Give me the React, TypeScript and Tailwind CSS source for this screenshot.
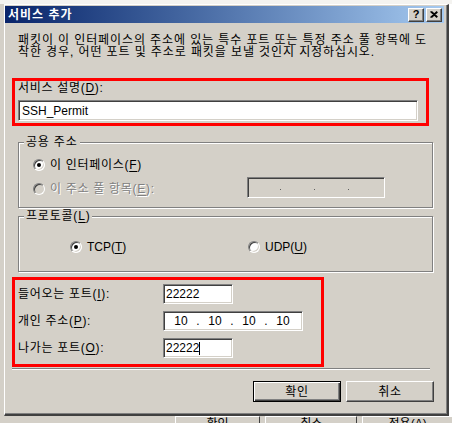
import React from "react";

const sunken =
  "border border-t-[#808080] border-l-[#808080] border-b-white border-r-white shadow-[inset_1px_1px_0_#404040,inset_-1px_-1px_0_#d4d0c8]";
const raised =
  "bg-[#d4d0c8] border border-t-white border-l-white border-r-[#404040] border-b-[#404040] shadow-[inset_-1px_-1px_0_#808080]";

function U({ c }: { c: string }) {
  return <span className="underline underline-offset-[2px] decoration-[1px]">{c}</span>;
}

function Radio({ checked, disabled }: { checked?: boolean; disabled?: boolean }) {
  return (
    <span
      className={
        "w-[12px] h-[12px] rounded-full shrink-0 flex items-center justify-center border border-t-[#808080] border-l-[#808080] border-r-white border-b-white shadow-[inset_1px_1px_0_#404040,inset_-1px_-1px_0_#d4d0c8] " +
        (disabled ? "bg-[#d4d0c8]" : "bg-white")
      }
    >
      {checked && <span className="w-[4px] h-[4px] rounded-full bg-black" />}
    </span>
  );
}

function Group({
  label,
  mt,
  h,
  children,
}: {
  label: React.ReactNode;
  mt: string;
  h: string;
  children: React.ReactNode;
}) {
  return (
    <div
      className={
        "relative ml-[13px] w-[415px] border border-[#808080] shadow-[inset_1px_1px_0_#fff,1px_1px_0_#fff] flex flex-col " +
        mt +
        " " +
        h
      }
    >
      <span className="absolute left-[5px] -top-[7px] bg-[#d4d0c8] px-[2px] text-[12px] leading-[12px] tracking-[0.8px]">
        {label}
      </span>
      {children}
    </div>
  );
}

export default function App() {
  return (
    <div className="w-[452px] h-[423px] overflow-hidden bg-white flex flex-col font-['Liberation_Sans','Noto_Sans_CJK_KR',sans-serif] text-[12px] leading-[12px] text-black">
      <div className="h-[4px] shrink-0 bg-[#f4f3f0]" />
      <div className="flex shrink-0">
        <div className="w-[4px] bg-[#d4d0c8]" />
        {/* window */}
        <div className="w-[445px] h-[412px] bg-[#d4d0c8] border-l border-t border-l-white border-t-white border-r-2 border-b-2 border-r-[#404040] border-b-[#404040] shadow-[inset_-1px_-1px_0_#808080] flex flex-col">
          {/* title bar */}
          <div className="mt-[1px] mr-[3px] h-[17px] bg-linear-to-r from-[#0a246a] to-[#a6caf0] flex items-center pl-[3px] pr-[2px]">
            <span className="text-white font-bold text-[12px] leading-[12px] tracking-[1px]">서비스 추가</span>
            <div className="ml-auto flex gap-[2px]">
              <div className={"w-[16px] h-[14px] flex items-center justify-center " + raised}>
                <span className="font-bold text-[11px] leading-[11px]">?</span>
              </div>
              <div className={"w-[16px] h-[14px] flex items-center justify-center " + raised}>
                <svg width="8" height="7" viewBox="0 0 8 7">
                  <path d="M0.5 0.5 L7 6.5 M1.5 0.5 L7.5 6 M7 0.5 L0.5 6.5 M7.5 1 L1.5 6.5" stroke="#000" strokeWidth="1.2" />
                </svg>
              </div>
            </div>
          </div>

          {/* description */}
          <div className="mt-[11px] ml-[13px] whitespace-nowrap tracking-[0.9px]">
            <div>패킷이 이 인터페이스의 주소에 있는 특수 포트 또는 특정 주소 풀 항목에 도</div>
            <div>착한 경우, 어떤 포트 및 주소로 패킷을 보낼 것인지 지정하십시오.</div>
          </div>

          {/* red box 1 */}
          <div className="mt-[20px] ml-[7px] w-[417px] h-[48px] border-[3px] border-[#ff0000] flex flex-col px-[3px]">
            <div className="mt-[1px] h-[12px] tracking-[0.7px]">
              서비스 설명(<U c="D" />):
            </div>
            <div className={"mt-[6px] w-[400px] h-[21px] bg-white flex items-center pl-[3px] " + sunken}>
              SSH_Permit
            </div>
          </div>

          {/* group 1 */}
          <Group label="공용 주소" mt="mt-[16px]" h="h-[66px]">
            <div className="mt-[16px] ml-[14px] flex items-center gap-[5px] h-[12px]">
              <Radio checked />
              <span className="tracking-[0.7px]">
                이 인터페이스(<U c="F" />)
              </span>
            </div>
            <div className="mt-[6px] ml-[14px] flex items-center h-[21px]">
              <div className="w-[214px] flex items-center gap-[5px] mt-[2px]">
                <Radio disabled />
                <span className="text-[#808080] [text-shadow:1px_1px_0_#fff] tracking-[0.7px]">
                  이 주소 풀 항목(<U c="E" />):
                </span>
              </div>
              <div className={"w-[138px] h-[21px] bg-[#d4d0c8] flex items-center pl-[32px] " + sunken}>
                <span className="mt-[3px] w-[1px] h-[1px] bg-[#606060]" />
                <span className="w-[33px]" />
                <span className="mt-[3px] w-[1px] h-[1px] bg-[#606060]" />
                <span className="w-[33px]" />
                <span className="mt-[3px] w-[1px] h-[1px] bg-[#606060]" />
              </div>
            </div>
          </Group>

          {/* group 2 */}
          <Group
            label={
              <>
                프로토콜(<U c="L" />)
              </>
            }
            mt="mt-[8px]"
            h="h-[56px]"
          >
            <div className="mt-[24px] ml-[51px] flex items-center h-[12px]">
              <div className="w-[178px] flex items-center gap-[5px]">
                <Radio checked />
                <span>
                  TCP(<U c="T" />)
                </span>
              </div>
              <div className="flex items-center gap-[5px]">
                <Radio />
                <span>
                  UDP(<U c="U" />)
                </span>
              </div>
            </div>
          </Group>

          {/* red box 2 */}
          <div className="mt-[5px] ml-[7px] w-[312px] h-[90px] border-[3px] border-[#ff0000] flex flex-col pl-[3px] pt-[4px] gap-[7px]">
            <div className="flex items-center h-[20px]">
              <span className="w-[145px] tracking-[0.7px]">
                들어오는 포트(<U c="I" />):
              </span>
              <div className={"w-[70px] h-[20px] bg-white flex items-center pl-[2px] " + sunken}>22222</div>
            </div>
            <div className="flex items-center h-[20px]">
              <span className="w-[145px] tracking-[0.7px]">
                개인 주소(<U c="P" />):
              </span>
              <div className={"w-[140px] h-[20px] bg-white flex items-center pl-[10px] " + sunken}>
                <span className="w-[14px] text-center">10</span>
                <span className="w-[20px] text-center">.</span>
                <span className="w-[14px] text-center">10</span>
                <span className="w-[20px] text-center">.</span>
                <span className="w-[14px] text-center">10</span>
                <span className="w-[20px] text-center">.</span>
                <span className="w-[14px] text-center">10</span>
              </div>
            </div>
            <div className="flex items-center h-[20px]">
              <span className="w-[145px] tracking-[0.7px]">
                나가는 포트(<U c="O" />):
              </span>
              <div className={"w-[70px] h-[20px] bg-white flex items-center pl-[2px] " + sunken}>
                22222
                <span className="w-[1px] h-[13px] bg-black" />
              </div>
            </div>
          </div>

          {/* separator */}
          <div className="mt-[1px] ml-[7px] w-[418px] h-[2px] border-t border-t-[#808080] border-b border-b-white" />

          {/* buttons */}
          <div className="mt-[11px] ml-[248px] flex gap-[5px] tracking-[0.7px]">
            <div className="w-[88px] h-[21px] bg-[#d4d0c8] border border-black shadow-[inset_1px_1px_0_#fff,inset_-1px_-1px_0_#404040,inset_-2px_-2px_0_#808080] flex items-center justify-center">
              확인
            </div>
            <div className={"w-[88px] h-[21px] flex items-center justify-center " + raised}>취소</div>
          </div>
        </div>
      </div>

      {/* underlying dialog strip */}
      <div className="h-[7px] shrink-0 bg-[#d4d0c8] flex overflow-hidden">
        <div className="w-[175px]" />
        <div className="w-[86px] h-[12px] border-l border-t border-l-white border-t-white border-r border-r-[#404040] flex justify-center pt-[1px]">
          <span>확인</span>
        </div>
        <div className="ml-[5px] w-[92px] h-[12px] border-l border-t border-l-white border-t-white border-r border-r-[#404040] flex justify-center pt-[1px]">
          <span>취소</span>
        </div>
        <div className="ml-[5px] w-[90px] h-[12px] border-l border-t border-l-white border-t-white flex justify-center pt-[1px]">
          <span>적용(A)</span>
        </div>
      </div>
    </div>
  );
}
